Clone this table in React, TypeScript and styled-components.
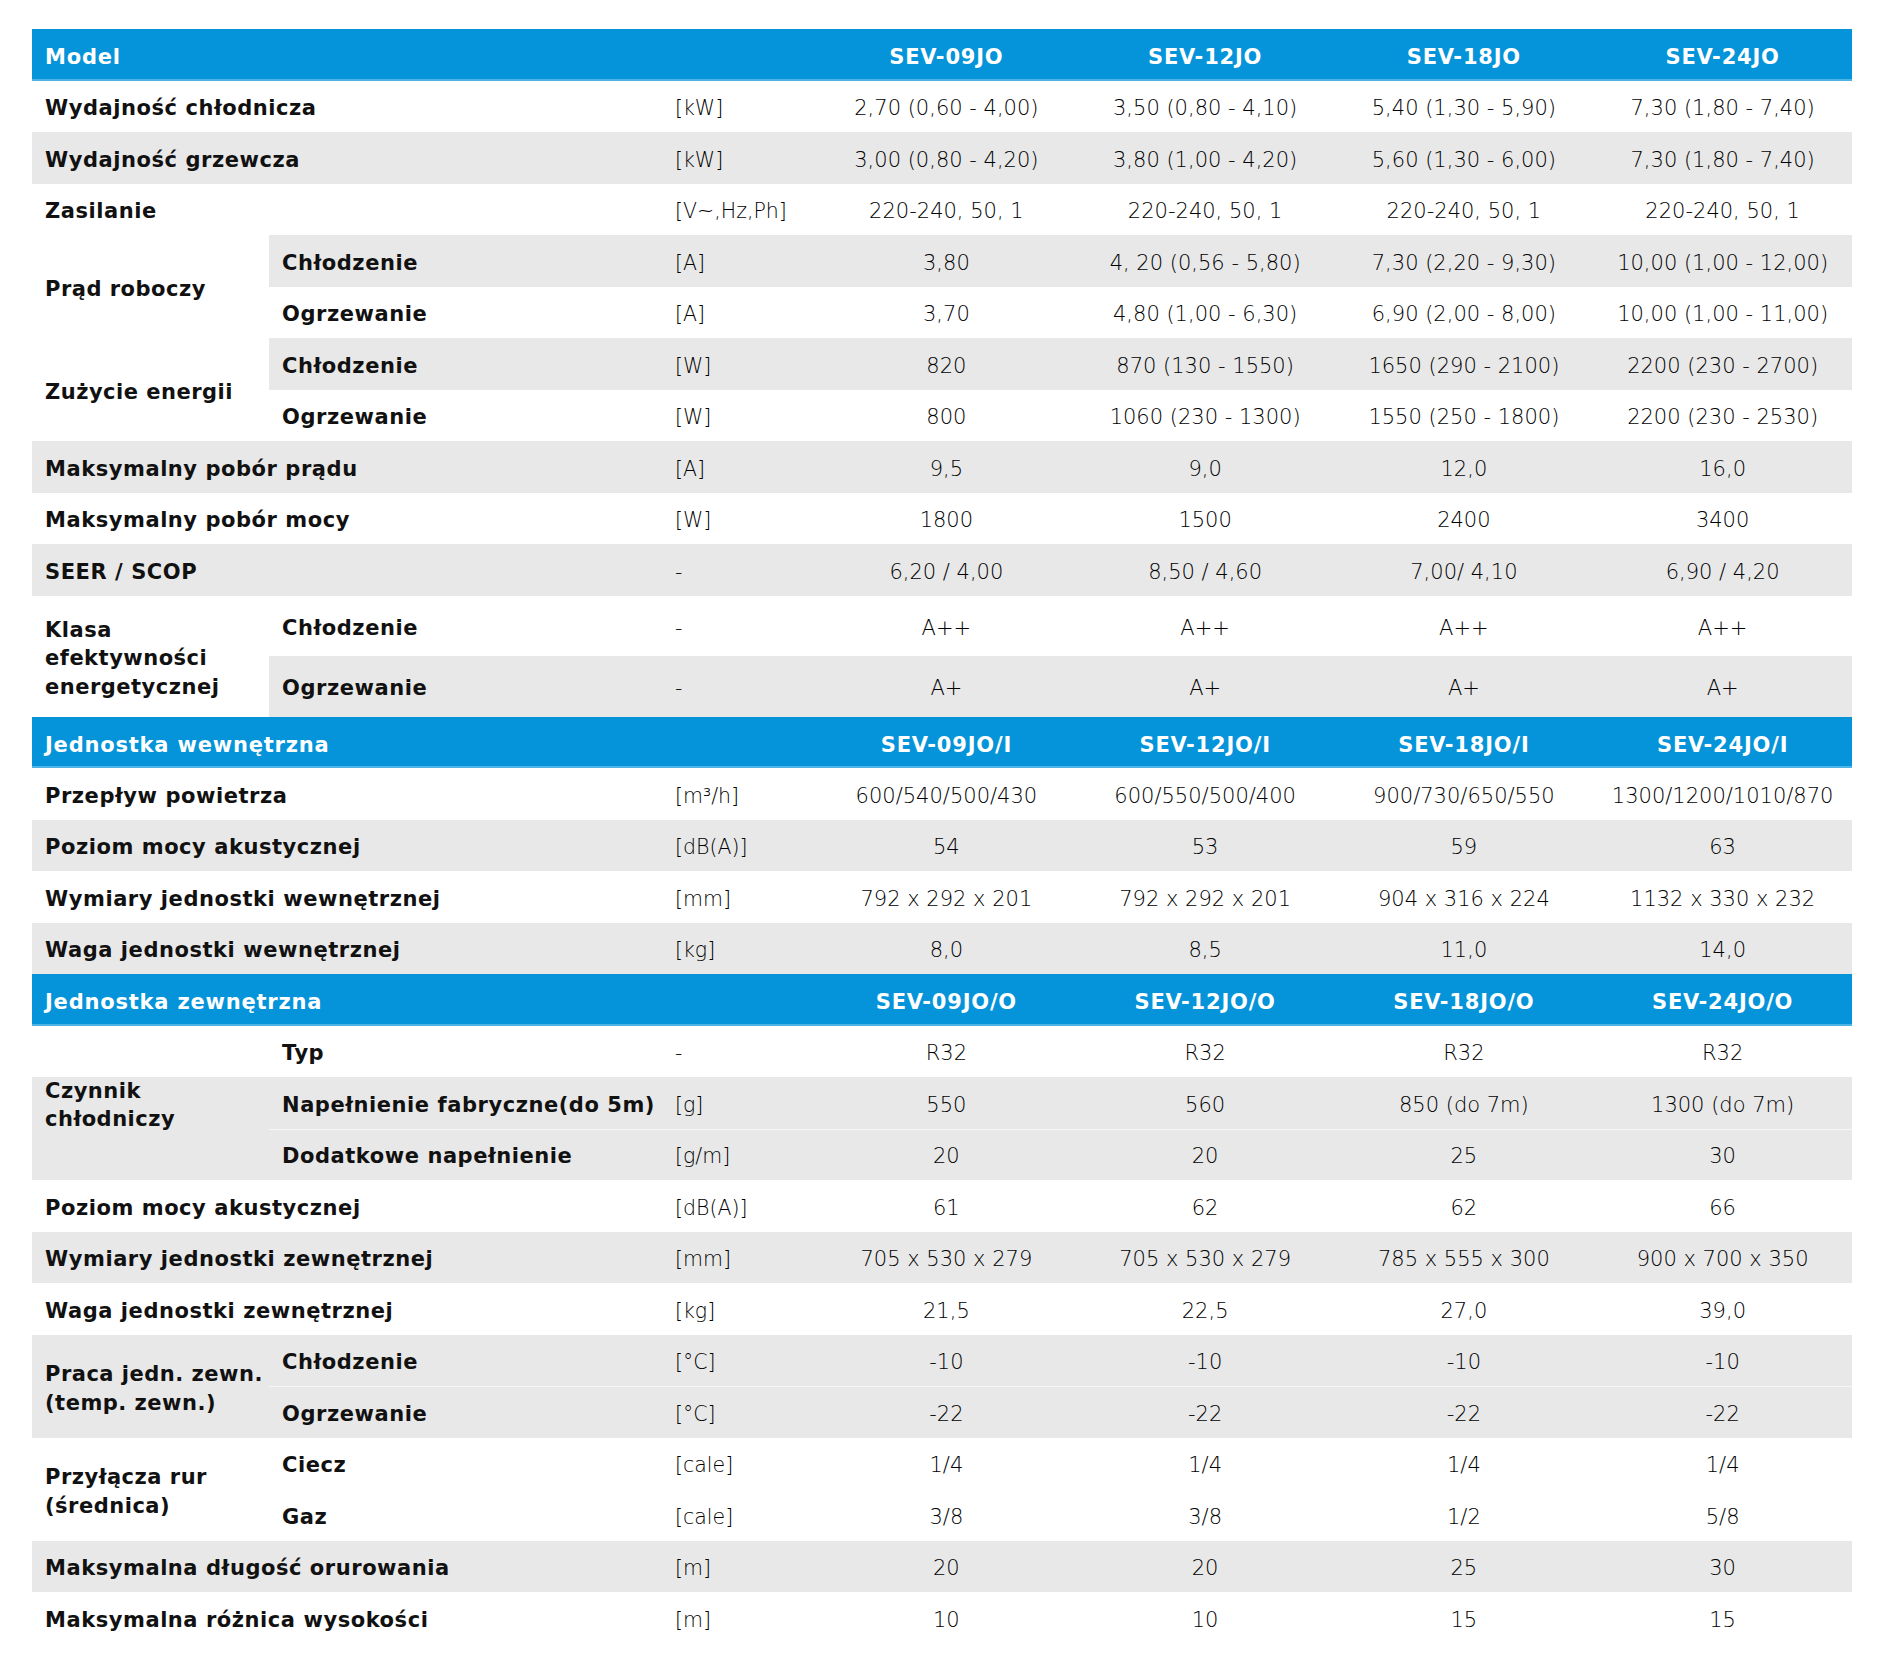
import React from 'react';
import styled, { createGlobalStyle } from 'styled-components';

const GlobalStyle = createGlobalStyle`
  body {
    margin: 0;
    background: #fff;
    font-family: "DejaVu Sans", "Liberation Sans", sans-serif;
    color: #111;
  }
`;

const BLUE = '#0594d9';
const GRAY = '#e8e8e8';

type Bg = 'white' | 'gray' | 'split';

const bgOf = (bg: Bg) =>
  bg === 'gray' ? GRAY : bg === 'split' ? `linear-gradient(#fff 0 33.34%, ${GRAY} 33.34% 100%)` : '#fff';

const Page = styled.div`
  padding: 29px 32px 26px;
`;

const Table = styled.div`
  width: 1820px;
  display: flex;
  flex-direction: column;
`;

const HeadRow = styled.div`
  display: grid;
  grid-template-columns: 785px repeat(4, 1fr);
  height: 51.5px;
  background: ${BLUE};
  box-shadow: inset 0 -2px 0 #4fb3e6;
  color: #fff;
  font-weight: 700;
  font-size: 21px;
  letter-spacing: 0.8px;
`;

const HeadCell = styled.div<{ $center?: boolean }>`
  display: flex;
  align-items: center;
  justify-content: ${p => (p.$center ? 'center' : 'flex-start')};
  padding: 5px 13px 0;
`;

const Row = styled.div<{ $bg: Bg; $tall?: boolean; $divider?: boolean }>`
  display: grid;
  grid-template-columns: 630px 155px repeat(4, 1fr);
  height: ${p => (p.$tall ? '60.5px' : '51.5px')};
  background: ${p => bgOf(p.$bg)};
  box-shadow: ${p => (p.$divider ? 'inset 0 1px 0 #f7f7f7' : 'none')};
`;

const SubRow = styled(Row)`
  grid-template-columns: 393px 155px repeat(4, 1fr);
`;

const Group = styled.div`
  display: flex;
`;

const GroupLabel = styled.div<{ $bg: Bg }>`
  width: 237px;
  flex-shrink: 0;
  display: flex;
  align-items: center;
  padding: 5px 13px 0;
  box-sizing: border-box;
  background: ${p => bgOf(p.$bg)};
  font-weight: 700;
  font-size: 21px;
  letter-spacing: 0.5px;
  line-height: 28.5px;
  white-space: nowrap;
`;

const SubRows = styled.div`
  flex: 1;
  display: flex;
  flex-direction: column;
`;

const Label = styled.div`
  display: flex;
  align-items: center;
  padding: 4px 13px 0;
  font-weight: 700;
  font-size: 21px;
  letter-spacing: 0.55px;
  white-space: nowrap;
`;

const Unit = styled.div`
  display: flex;
  align-items: center;
  padding: 4px 13px 0;
  font-weight: 300;
  font-size: 20.5px;
  color: #000;
  white-space: nowrap;
`;

const Value = styled.div`
  display: flex;
  align-items: center;
  justify-content: center;
  padding-top: 4px;
  font-weight: 300;
  font-size: 21px;
  color: #000;
  white-space: nowrap;
`;

type Line = { label: string; unit: string; values: string[]; bg: Bg; divider?: boolean };
type GroupDef = { group: React.ReactNode; bg: Bg; tall?: boolean; rows: Line[] };
type Item = { head: string; models: string[] } | Line | GroupDef;

const four = (v: string) => [v, v, v, v];

const data: Item[] = [
  { head: 'Model', models: ['SEV-09JO', 'SEV-12JO', 'SEV-18JO', 'SEV-24JO'] },
  { label: 'Wydajność chłodnicza', unit: '[kW]', values: ['2,70 (0,60 - 4,00)', '3,50 (0,80 - 4,10)', '5,40 (1,30 - 5,90)', '7,30 (1,80 - 7,40)'], bg: 'white' },
  { label: 'Wydajność grzewcza', unit: '[kW]', values: ['3,00 (0,80 - 4,20)', '3,80 (1,00 - 4,20)', '5,60 (1,30 - 6,00)', '7,30 (1,80 - 7,40)'], bg: 'gray' },
  { label: 'Zasilanie', unit: '[V~,Hz,Ph]', values: four('220-240, 50, 1'), bg: 'white' },
  {
    group: 'Prąd roboczy', bg: 'white', rows: [
      { label: 'Chłodzenie', unit: '[A]', values: ['3,80', '4, 20 (0,56 - 5,80)', '7,30 (2,20 - 9,30)', '10,00 (1,00 - 12,00)'], bg: 'gray' },
      { label: 'Ogrzewanie', unit: '[A]', values: ['3,70', '4,80 (1,00 - 6,30)', '6,90 (2,00 - 8,00)', '10,00 (1,00 - 11,00)'], bg: 'white' },
    ],
  },
  {
    group: 'Zużycie energii', bg: 'white', rows: [
      { label: 'Chłodzenie', unit: '[W]', values: ['820', '870 (130 - 1550)', '1650 (290 - 2100)', '2200 (230 - 2700)'], bg: 'gray' },
      { label: 'Ogrzewanie', unit: '[W]', values: ['800', '1060 (230 - 1300)', '1550 (250 - 1800)', '2200 (230 - 2530)'], bg: 'white' },
    ],
  },
  { label: 'Maksymalny pobór prądu', unit: '[A]', values: ['9,5', '9,0', '12,0', '16,0'], bg: 'gray' },
  { label: 'Maksymalny pobór mocy', unit: '[W]', values: ['1800', '1500', '2400', '3400'], bg: 'white' },
  { label: 'SEER / SCOP', unit: '-', values: ['6,20 / 4,00', '8,50 / 4,60', '7,00/ 4,10', '6,90 / 4,20'], bg: 'gray' },
  {
    group: <>Klasa<br />efektywności<br />energetycznej</>, bg: 'white', tall: true, rows: [
      { label: 'Chłodzenie', unit: '-', values: four('A++'), bg: 'white' },
      { label: 'Ogrzewanie', unit: '-', values: four('A+'), bg: 'gray' },
    ],
  },
  { head: 'Jednostka wewnętrzna', models: ['SEV-09JO/I', 'SEV-12JO/I', 'SEV-18JO/I', 'SEV-24JO/I'] },
  { label: 'Przepływ powietrza', unit: '[m³/h]', values: ['600/540/500/430', '600/550/500/400', '900/730/650/550', '1300/1200/1010/870'], bg: 'white' },
  { label: 'Poziom mocy akustycznej', unit: '[dB(A)]', values: ['54', '53', '59', '63'], bg: 'gray' },
  { label: 'Wymiary jednostki wewnętrznej', unit: '[mm]', values: ['792 x 292 x 201', '792 x 292 x 201', '904 x 316 x 224', '1132 x 330 x 232'], bg: 'white' },
  { label: 'Waga jednostki wewnętrznej', unit: '[kg]', values: ['8,0', '8,5', '11,0', '14,0'], bg: 'gray' },
  { head: 'Jednostka zewnętrzna', models: ['SEV-09JO/O', 'SEV-12JO/O', 'SEV-18JO/O', 'SEV-24JO/O'] },
  {
    group: <>Czynnik<br />chłodniczy</>, bg: 'split', rows: [
      { label: 'Typ', unit: '-', values: four('R32'), bg: 'white' },
      { label: 'Napełnienie fabryczne(do 5m)', unit: '[g]', values: ['550', '560', '850 (do 7m)', '1300 (do 7m)'], bg: 'gray' },
      { label: 'Dodatkowe napełnienie', unit: '[g/m]', values: ['20', '20', '25', '30'], bg: 'gray', divider: true },
    ],
  },
  { label: 'Poziom mocy akustycznej', unit: '[dB(A)]', values: ['61', '62', '62', '66'], bg: 'white' },
  { label: 'Wymiary jednostki zewnętrznej', unit: '[mm]', values: ['705 x 530 x 279', '705 x 530 x 279', '785 x 555 x 300', '900 x 700 x 350'], bg: 'gray' },
  { label: 'Waga jednostki zewnętrznej', unit: '[kg]', values: ['21,5', '22,5', '27,0', '39,0'], bg: 'white' },
  {
    group: <>Praca jedn. zewn.<br />(temp. zewn.)</>, bg: 'gray', rows: [
      { label: 'Chłodzenie', unit: '[°C]', values: four('-10'), bg: 'gray' },
      { label: 'Ogrzewanie', unit: '[°C]', values: four('-22'), bg: 'gray', divider: true },
    ],
  },
  {
    group: <>Przyłącza rur<br />(średnica)</>, bg: 'white', rows: [
      { label: 'Ciecz', unit: '[cale]', values: four('1/4'), bg: 'white' },
      { label: 'Gaz', unit: '[cale]', values: ['3/8', '3/8', '1/2', '5/8'], bg: 'white' },
    ],
  },
  { label: 'Maksymalna długość orurowania', unit: '[m]', values: ['20', '20', '25', '30'], bg: 'gray' },
  { label: 'Maksymalna różnica wysokości', unit: '[m]', values: ['10', '10', '15', '15'], bg: 'white' },
];

const Cells: React.FC<{ line: Line }> = ({ line }) => (
  <>
    <Label>{line.label}</Label>
    <Unit>{line.unit}</Unit>
    {line.values.map((v, i) => (
      <Value key={i}>{v}</Value>
    ))}
  </>
);

const App: React.FC = () => (
  <Page>
    <GlobalStyle />
    <Table>
      {data.map((item, i) => {
        if ('head' in item) {
          return (
            <HeadRow key={i}>
              <HeadCell>{item.head}</HeadCell>
              {item.models.map(m => (
                <HeadCell key={m} $center>{m}</HeadCell>
              ))}
            </HeadRow>
          );
        }
        if ('group' in item) {
          return (
            <Group key={i}>
              <GroupLabel $bg={item.bg}>
                <div>{item.group}</div>
              </GroupLabel>
              <SubRows>
                {item.rows.map((r, j) => (
                  <SubRow key={j} $bg={r.bg} $tall={item.tall} $divider={r.divider}>
                    <Cells line={r} />
                  </SubRow>
                ))}
              </SubRows>
            </Group>
          );
        }
        return (
          <Row key={i} $bg={item.bg} $divider={item.divider}>
            <Cells line={item} />
          </Row>
        );
      })}
    </Table>
  </Page>
);

export default App;
